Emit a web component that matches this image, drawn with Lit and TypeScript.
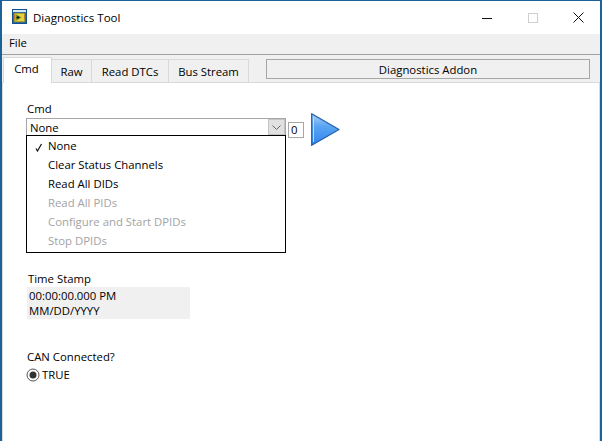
import { LitElement, html, css } from 'lit';
import { customElement } from 'lit/decorators.js';

@customElement('app-root')
export class AppRoot extends LitElement {
  static styles = css`
    :host {
      display: block;
      width: 602px;
      height: 441px;
      font-family: 'Open Sans', 'Noto Sans', sans-serif;
      font-size: 11.35px;
      color: #000;
    }
    .window {
      box-sizing: border-box;
      width: 602px;
      height: 441px;
      border: 2px solid #1c6199;
      border-width: 1px 2px 0 2px;
      background: #fff;
      display: flex;
      flex-direction: column;
      overflow: hidden;
    }
    .titlebar {
      height: 33px;
      display: flex;
      align-items: center;
      padding-left: 10px;
      flex: none;
    }
    .appicon {
      margin-bottom: 2px;
    }
    .title {
      margin-left: 6px;
      font-size: 11.5px;
    }
    .caption {
      margin-left: auto;
      margin-right: -1px;
      display: flex;
      align-items: center;
    }
    .caption span {
      width: 45.5px;
      height: 30px;
      display: flex;
      align-items: center;
      justify-content: center;
    }
    .menubar {
      height: 17px;
      flex: none;
      background: #f0f0f0;
      border-bottom: 1px solid #a0a0a0;
      padding: 0 0 3px 7px;
      display: flex;
      align-items: center;
    }
    .tabrow {
      flex: none;
      height: 27px;
      background: #f0f0f0;
      display: flex;
      align-items: flex-end;
      padding-left: 1px;
    }
    .tab {
      box-sizing: border-box;
      height: 23px;
      border: 1px solid #d9d9d9;
      border-left: none;
      border-bottom: none;
      display: flex;
      align-items: center;
      justify-content: center;
    }
    .tab.active {
      height: 26px;
      margin-bottom: -1px;
      padding: 0 2px 4px 0;
      background: #fff;
      border: 1px solid #d9d9d9;
      border-bottom: none;
      width: 49px;
      z-index: 1;
    }
    .addon {
      box-sizing: border-box;
      margin-left: 17px;
      margin-bottom: 3px;
      width: 324px;
      height: 20px;
      border: 1px solid #a6a6a6;
      display: flex;
      align-items: center;
      justify-content: center;
      background: #f0f0f0;
    }
    .panel {
      flex: 1;
      border: 1px solid #d9d9d9;
      border-bottom: none;
      padding: 18px 0 0 23px;
      display: flex;
      flex-direction: column;
      align-items: flex-start;
    }
    .label {
      line-height: 15px;
      padding-left: 1px;
    }
    .cmdrow {
      display: flex;
      align-items: flex-start;
      position: relative;
      margin-top: 2px;
    }
    .ring {
      box-sizing: border-box;
      width: 260px;
      height: 18px;
      border: 1px solid #a6a6a6;
      padding-left: 3px;
      display: flex;
      align-items: center;
      justify-content: space-between;
    }
    .arrow {
      box-sizing: border-box;
      width: 17px;
      height: 16px;
      background: #e1e1e1;
      border: 1px solid #c4c4c4;
      display: flex;
      align-items: center;
      justify-content: center;
    }
    .num {
      box-sizing: border-box;
      width: 16px;
      height: 16px;
      margin: 4px 0 0 2px;
      border: 1px solid #a6a6a6;
      padding-left: 2px;
      line-height: 14px;
    }
    .run {
      margin: -5px 0 0 7px;
      display: block;
    }
    .menu {
      box-sizing: border-box;
      position: absolute;
      left: 0;
      top: 17px;
      width: 260px;
      height: 118px;
      border: 1px solid #000;
      background: #fff;
      padding-top: 1px;
      z-index: 2;
    }
    .item {
      height: 19px;
      line-height: 18px;
      padding-left: 21px;
      position: relative;
    }
    .item.off {
      color: #a3a3a3;
    }
    .check {
      position: absolute;
      left: 8px;
      top: 6px;
    }
    .stamp {
      margin-top: 125px;
      margin-left: 1px;
    }
    .stamp .label {
      margin-bottom: 1px;
    }
    .time {
      box-sizing: border-box;
      width: 163px;
      height: 32px;
      background: #f0f0f0;
      line-height: 15px;
      padding: 1px 0 0 2px;
    }
    .can {
      margin-top: 30px;
    }
    .led {
      display: flex;
      align-items: center;
      gap: 2px;
      margin-top: 3px;
    }
  `;

  render() {
    return html`
      <div class="window">
        <div class="titlebar">
          <svg class="appicon" width="15" height="15" viewBox="0 0 15 15">
            <rect x="0.5" y="0.5" width="14" height="14" fill="#2a7fd4" stroke="#14508f" />
            <rect x="1" y="1" width="13" height="2" fill="#d7e9f8" />
            <rect x="2" y="4" width="11" height="9" fill="#e3d23f" stroke="#3d3d10" stroke-width="0.6" />
            <rect x="1" y="6" width="1.5" height="4" fill="#d2452c" />
            <rect x="12.5" y="6" width="1.5" height="4" fill="#d2452c" />
            <path d="M3.5 5L3.5 12L9.5 8.5Z" fill="#6f8d24" />
            <path d="M4.5 8.5H7.5M6 7V10" stroke="#111" stroke-width="1" />
          </svg>
          <span class="title">Diagnostics Tool</span>
          <div class="caption">
            <span>
              <svg width="10" height="10" viewBox="0 0 10 10"><path d="M0 5.5H10" stroke="#111" stroke-width="1" /></svg>
            </span>
            <span>
              <svg width="10" height="10" viewBox="0 0 10 10"><rect x="0.5" y="0.5" width="9" height="9" fill="none" stroke="#cfcfcf" /></svg>
            </span>
            <span>
              <svg width="11" height="11" viewBox="0 0 11 11"><path d="M0.5 0.5L10.5 10.5M10.5 0.5L0.5 10.5" stroke="#111" stroke-width="1" /></svg>
            </span>
          </div>
        </div>
        <div class="menubar">File</div>
        <div class="tabrow">
          <div class="tab active">Cmd</div>
          <div class="tab" style="width:40px">Raw</div>
          <div class="tab" style="width:77px">Read DTCs</div>
          <div class="tab" style="width:80px">Bus Stream</div>
          <div class="addon">Diagnostics Addon</div>
        </div>
        <div class="panel">
          <div class="label">Cmd</div>
          <div class="cmdrow">
            <div class="ring">
              None
              <span class="arrow">
                <svg width="9" height="5" viewBox="0 0 9 5"><path d="M0.5 0.5L4.5 4.5L8.5 0.5" fill="none" stroke="#666" /></svg>
              </span>
            </div>
            <div class="num">0</div>
            <svg class="run" width="29" height="33" viewBox="0 0 29 33">
              <defs>
                <linearGradient id="g" x1="0" y1="0" x2="0" y2="1">
                  <stop offset="0" stop-color="#a9d2f8" />
                  <stop offset="0.4" stop-color="#5aa4f2" />
                  <stop offset="1" stop-color="#2f86ee" />
                </linearGradient>
              </defs>
              <path d="M0.7 0.7 L28 16.5 L0.7 32.3 Z" fill="url(#g)" stroke="#2462ad" stroke-width="1.3" stroke-linejoin="round" />
              <path d="M2.5 4 V29" stroke="#bcdcfa" stroke-width="1" />
            </svg>
            <div class="menu">
              <div class="item">
                <svg class="check" width="8" height="9" viewBox="0 0 8 9"><path d="M1 5.5L2.5 8L6.5 1" fill="none" stroke="#111" stroke-width="1.2" /></svg>
                None
              </div>
              <div class="item">Clear Status Channels</div>
              <div class="item">Read All DIDs</div>
              <div class="item off">Read All PIDs</div>
              <div class="item off">Configure and Start DPIDs</div>
              <div class="item off">Stop DPIDs</div>
            </div>
          </div>
          <div class="stamp">
            <div class="label">Time Stamp</div>
            <div class="time">00:00:00.000 PM<br />MM/DD/YYYY</div>
          </div>
          <div class="can label">CAN Connected?</div>
          <div class="led">
            <svg width="14" height="14" viewBox="0 0 14 14">
              <circle cx="7" cy="7" r="6" fill="#fff" stroke="#555" />
              <circle cx="7" cy="7" r="3.5" fill="#333" />
            </svg>
            TRUE
          </div>
        </div>
      </div>
    `;
  }
}
